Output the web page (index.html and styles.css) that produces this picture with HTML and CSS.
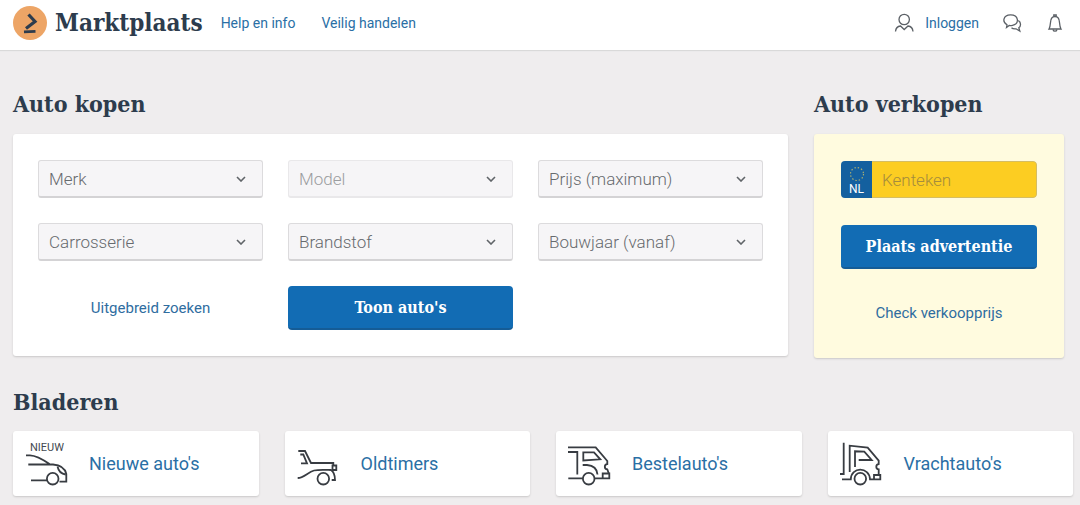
FILE: index.html
```html
<!DOCTYPE html>
<html lang="nl">
<head>
<meta charset="utf-8">
<meta name="viewport" content="width=device-width, initial-scale=1">
<title>Marktplaats - Auto's</title>
<link rel="stylesheet" href="styles.css">
</head>
<body>
<header class="header">
  <a class="brand" href="#">
    <svg class="brand-mark" viewBox="0 0 34 34" aria-hidden="true">
      <circle cx="17" cy="17" r="17" fill="#eda566"/>
      <path d="M15.500 8.500L22 15.500L13 22.500" fill="none" stroke="#2d3c4d" stroke-width="3.200"/>
      <path d="M11 25.800L22.500 25.300" fill="none" stroke="#2d3c4d" stroke-width="2.800"/>
    </svg>
    <span class="brand-name">Marktplaats</span>
  </a>
  <nav class="nav">
    <a href="#">Help en info</a>
    <a href="#">Veilig handelen</a>
  </nav>
  <div class="account">
    <a class="login" href="#">
      <svg class="icon" viewBox="0 0 20 20" aria-hidden="true">
        <circle cx="10.200" cy="6.500" r="5.200"/>
        <path d="M1.500 18.500C1.800 15 3.500 13.300 6.500 13L10.200 16.500L14 13C17 13.300 18.700 15 19 18.500"/>
      </svg>
      <span>Inloggen</span>
    </a>
    <a class="icon-link" href="#" aria-label="Berichten">
      <svg class="icon" viewBox="0 0 20 20" aria-hidden="true">
        <path d="M4.500 14.500L5 11.800C0 9 1 2 8.500 1.800C16.500 1.700 18 10.500 10.500 12.300C9 12.700 8 12.600 7.200 12.500Z"/>
        <path d="M16.300 7.500C19.500 9.500 18.800 13.500 16.800 14.800L17.800 18L14 15.800C11.800 16 10.300 15.500 9.500 14.700"/>
      </svg>
    </a>
    <a class="icon-link" href="#" aria-label="Meldingen">
      <svg class="icon" viewBox="0 0 20 20" aria-hidden="true">
        <path d="M4 16H16C15 14.500 14.800 13 14.500 9.500C14.300 5 12.800 3.500 10 3.500S5.700 5 5.500 9.500C5.200 13 5 14.500 4 16Z"/>
        <path d="M8.800 3.500V2H11.200V3.500M8 16.500C8.500 18.800 11.500 18.800 12 16.500"/>
      </svg>
    </a>
  </div>
</header>

<main class="page">
  <div class="deals">
    <section>
      <h2 class="heading">Auto kopen</h2>
      <form class="card search">
        <div class="field">
          <select class="select" aria-label="Merk"><option>Merk</option></select>
          <svg class="chevron" viewBox="0 0 10 6" aria-hidden="true"><path d="M1 1L5 5L9 1"/></svg>
        </div>
        <div class="field">
          <select class="select" aria-label="Model" disabled><option>Model</option></select>
          <svg class="chevron" viewBox="0 0 10 6" aria-hidden="true"><path d="M1 1L5 5L9 1"/></svg>
        </div>
        <div class="field">
          <select class="select" aria-label="Prijs (maximum)"><option>Prijs (maximum)</option></select>
          <svg class="chevron" viewBox="0 0 10 6" aria-hidden="true"><path d="M1 1L5 5L9 1"/></svg>
        </div>
        <div class="field">
          <select class="select" aria-label="Carrosserie"><option>Carrosserie</option></select>
          <svg class="chevron" viewBox="0 0 10 6" aria-hidden="true"><path d="M1 1L5 5L9 1"/></svg>
        </div>
        <div class="field">
          <select class="select" aria-label="Brandstof"><option>Brandstof</option></select>
          <svg class="chevron" viewBox="0 0 10 6" aria-hidden="true"><path d="M1 1L5 5L9 1"/></svg>
        </div>
        <div class="field">
          <select class="select" aria-label="Bouwjaar (vanaf)"><option>Bouwjaar (vanaf)</option></select>
          <svg class="chevron" viewBox="0 0 10 6" aria-hidden="true"><path d="M1 1L5 5L9 1"/></svg>
        </div>
        <a class="text-link" href="#">Uitgebreid zoeken</a>
        <button class="button" type="button">Toon auto's</button>
      </form>
    </section>

    <section>
      <h2 class="heading">Auto verkopen</h2>
      <form class="card sell">
        <div class="plate">
          <label class="plate-country" for="plate">
            <svg class="stars" viewBox="0 0 16 16" aria-hidden="true"><circle cx="8" cy="8" r="6.500"/></svg>
            <span>NL</span>
          </label>
          <input class="plate-input" id="plate" type="text" placeholder="Kenteken" aria-label="Kenteken">
        </div>
        <button class="button" type="button">Plaats advertentie</button>
        <a class="text-link" href="#">Check verkoopprijs</a>
      </form>
    </section>
  </div>

  <section class="browse">
    <h2 class="heading">Bladeren</h2>
    <div class="tiles">
      <a class="card tile" href="#">
        <svg class="vehicle" viewBox="0 0 44 44" aria-hidden="true">
          <text class="vehicle-text" x="5" y="9">NIEUW</text>
          <path d="M1 13.300H5C11 13.500 18 17.500 24.500 22M3.300 22.500H28C35 23 40 26.500 41.300 32V39.700H34.500M6 38.300H22"/>
          <path d="M32.500 24.500C33.500 29 36 32 40.700 32.500"/>
          <circle cx="27.700" cy="36.700" r="5.800"/>
        </svg>
        <span>Nieuwe auto's</span>
      </a>
      <a class="card tile" href="#">
        <svg class="vehicle" viewBox="0 0 44 44" aria-hidden="true">
          <path d="M1.300 9H8L14 21H36.300V23M3.300 12.500H6.300L10 21.300H4"/>
          <path d="M35.500 23.500H39.300V28H35.500Z"/>
          <path d="M.7 36C7 36 11 30 17 28.500C22 27.300 28 27.800 34 28C37 30 38 33 38 38H34.700"/>
          <circle cx="26.300" cy="36.700" r="5.800"/>
        </svg>
        <span>Oldtimers</span>
      </a>
      <a class="card tile" href="#">
        <svg class="vehicle" viewBox="0 0 44 44" aria-hidden="true">
          <path d="M0 5.300H27.700L39.300 19V22C36 22.500 36 27 39.300 27.300L40.700 31.300M0 10H9.300V32.500"/>
          <path d="M15.300 16V10.300H26L32.300 17.300L15.300 18.500V16M14.700 23H19C25 23.500 29 26 29.500 32.500"/>
          <path d="M.3 36.300H15M26.500 36.300H34.700M34.700 31.500H41.300V36.300H34.700Z"/>
          <circle cx="20.700" cy="36.700" r="5.800"/>
        </svg>
        <span>Bestelauto's</span>
      </a>
      <a class="card tile" href="#">
        <svg class="vehicle" viewBox="0 0 44 44" aria-hidden="true">
          <path d="M3.700 .7V32H0M9.700 30V3.700L27.700 5.700L38.700 18.700V22C35.500 22.500 35.500 27 38.700 27.300V32"/>
          <path d="M15 25V9.300L24.300 9.700L31.700 18H18.700"/>
          <path d="M2 37.300H10.800C11 24.500 29.500 24.500 30 37.300H40.300V33H34V37"/>
          <circle cx="20.300" cy="36.700" r="5.800"/>
        </svg>
        <span>Vrachtauto's</span>
      </a>
    </div>
  </section>
</main>
</body>
</html>
```

FILE: styles.css
```css
* {
  box-sizing: border-box;
}

body {
  margin: 0;
  background: #efedee;
  color: #2d3c4d;
  font-family: Roboto, "Liberation Sans", sans-serif;
  font-size: 15px;
  line-height: 20px;
}

a {
  color: #2a6fa5;
  text-decoration: none;
}

.header {
  display: flex;
  align-items: center;
  height: 50px;
  padding: 0 15px 4px 13px;
  background: #fff;
  box-shadow: 0 1px 1px #d9d9d9;
  font-size: 14px;
}

.brand {
  display: flex;
  align-items: center;
  gap: 8px;
  color: #2d3c4d;
}

.brand-mark {
  width: 34px;
  height: 34px;
}

.brand-name,
.heading,
.button {
  font-family: "DejaVu Serif Condensed", "DejaVu Serif", serif;
  font-weight: 700;
}

.brand-name {
  font-size: 24px;
}

.nav {
  display: flex;
  gap: 26px;
  margin-left: 18px;
}

.account {
  display: flex;
  align-items: center;
  gap: 23px;
  margin-left: auto;
}

.login {
  display: flex;
  align-items: center;
  gap: 11px;
}

.icon-link {
  display: flex;
}

.icon {
  width: 20px;
  height: 20px;
  fill: none;
  stroke: #5b6066;
  stroke-width: 1.3;
}

.page {
  padding: 38px 7px 8px 13px;
}

.deals {
  display: grid;
  grid-template-columns: minmax(0, 31fr) minmax(0, 10fr);
  align-items: start;
  gap: 26px;
  padding-right: 9px;
}

.heading {
  margin: 0 0 14px;
  font-size: 23px;
  line-height: 32px;
}

.card {
  background: #fff;
  border-radius: 3px;
  box-shadow: 0 1px 2px #c9c8c8;
}

.search {
  display: grid;
  grid-template-columns: repeat(3, minmax(0, 1fr));
  gap: 25px;
  align-items: center;
  padding: 26px 25px;
}

.field {
  position: relative;
}

.select {
  display: block;
  width: 100%;
  height: 38px;
  padding: 0 32px 0 10px;
  border: 1px solid #dcdbdd;
  border-bottom: 2px solid #d4d3d5;
  border-radius: 3px;
  background: #f6f5f7;
  color: #666a6e;
  font: 300 17px Roboto, sans-serif;
  appearance: none;
}

.select:disabled {
  border-color: #e9e8ea;
  color: #9b9da0;
  opacity: 1;
}

.chevron {
  position: absolute;
  top: 16px;
  right: 17px;
  width: 10px;
  height: 6px;
  fill: none;
  stroke: #606468;
  stroke-width: 1.6;
  pointer-events: none;
}

.text-link {
  color: #2f6d9f;
  text-align: center;
}

.button {
  height: 44px;
  border: 0;
  border-bottom: 2px solid #155c96;
  border-radius: 4px;
  background: #126cb4;
  color: #fff;
  font-size: 16px;
}

.sell {
  display: flex;
  flex-direction: column;
  gap: 27px;
  padding: 27px 27px 35px;
  background: #fffbdf;
}

.sell .text-link {
  padding-top: 7px;
}

.plate {
  display: flex;
  height: 37px;
  overflow: hidden;
  border-radius: 4px;
}

.plate-country {
  display: flex;
  flex-direction: column;
  align-items: center;
  width: 31px;
  padding-top: 5px;
  background: #14609f;
  color: #fff;
  font-size: 12px;
  line-height: 14px;
}

.stars {
  width: 16px;
  height: 16px;
  fill: none;
  stroke: #a9ae73;
  stroke-width: 1.2;
  stroke-dasharray: 1.4 2;
}

.plate-input {
  flex: 1;
  min-width: 0;
  padding: 0 10px;
  border: 1px solid #d5bd62;
  border-left: 0;
  border-radius: 0 4px 4px 0;
  background: #fccd22;
  color: #2d3c4d;
  font: 300 17px Roboto, sans-serif;
}

.plate-input::placeholder {
  color: #a58c3d;
}

.browse {
  margin-top: 28px;
}

.browse .heading {
  margin-bottom: 13px;
}

.tiles {
  display: grid;
  grid-template-columns: repeat(4, minmax(0, 1fr));
  gap: 26px;
}

.tile {
  display: flex;
  align-items: center;
  gap: 20px;
  height: 65px;
  padding: 0 12px;
  font-size: 18px;
}

.vehicle {
  width: 44px;
  height: 44px;
  fill: none;
  stroke: #383c42;
  stroke-width: 1.8;
}

.vehicle-text {
  fill: #444950;
  stroke: none;
  font-size: 11px;
}
```
